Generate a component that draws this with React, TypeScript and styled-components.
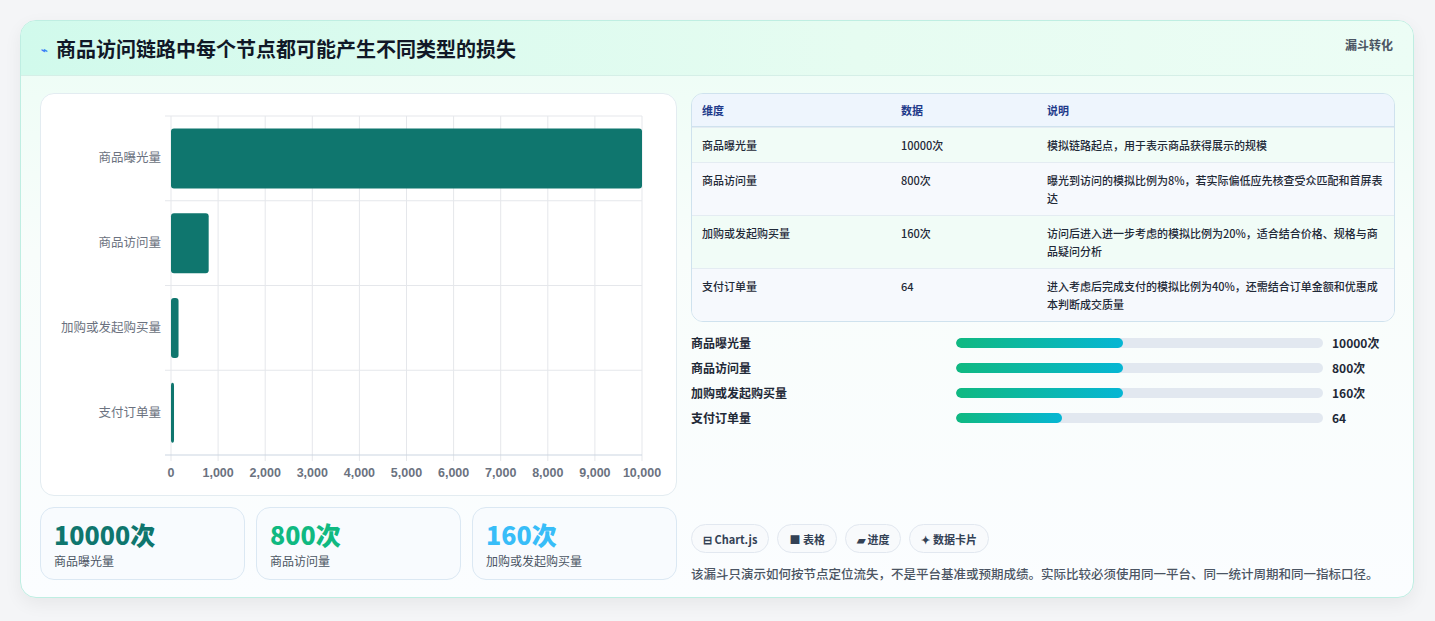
import React from 'react';
import styled, { createGlobalStyle } from 'styled-components';

const G = createGlobalStyle`
  html,body{margin:0;padding:0;background:#f4f5f7;}
  body{font-family:"Noto Sans CJK SC","Noto Sans",sans-serif;color:#1f2937;}
`;
const Page = styled.div`padding:20px 20px 0 20px;height:601px;`;
const Card = styled.div`
  width:1394px;height:578px;box-sizing:border-box;border:1px solid #bfeee2;border-radius:16px;
  background:linear-gradient(180deg,#ecfdf5 0%,#f8fdfb 40%,#fbfdff 100%);
  box-shadow:0 6px 18px rgba(0,0,0,0.06);overflow:hidden;
`;
const Header = styled.div`
  height:55px;box-sizing:border-box;display:flex;justify-content:space-between;align-items:flex-start;
  padding:0 20px 0 20px;border-bottom:1px solid #d5efe7;
  background:linear-gradient(90deg,#d1faec 0%,#e6fcf1 60%,#ecfdf5 100%);
`;
const Title = styled.h1`margin:0;margin-top:13px;font-size:20px;font-weight:700;color:#111827;display:flex;align-items:center;gap:8px;`;
const Tag = styled.div`margin-top:15px;font-size:12px;font-weight:700;color:#4b5563;`;
const Body = styled.div`display:grid;grid-template-columns:637px 704px;gap:14px;padding:17px 19px 0 19px;`;
const Col = styled.div`display:flex;flex-direction:column;`;
const ChartCard = styled.div`height:403px;box-sizing:border-box;background:#fff;border:1px solid #e3ecf1;border-radius:14px;`;
const Stats = styled.div`display:grid;grid-template-columns:repeat(3,1fr);gap:11px;margin-top:11px;`;
const Stat = styled.div`height:73px;box-sizing:border-box;border:1px solid #dbe8f3;border-radius:14px;background:#f8fbfe;padding:9px 13px;`;
const StatNum = styled.div<{c:string}>`font-size:25px;font-weight:800;color:${p=>p.c};line-height:34px;`;
const StatLbl = styled.div`font-size:12px;color:#4b5563;margin-top:1px;`;
const Table = styled.table`width:100%;table-layout:fixed;border-collapse:separate;border-spacing:0;border:1px solid #cfe2ee;border-radius:12px;overflow:hidden;font-size:11px;`;
const Th = styled.th<{w?:number}>`text-align:left;font-weight:700;color:#1e3a8a;background:#eef5fd;height:32px;padding:0 10px;border-bottom:1px solid #cfe2ee;${p=>p.w?`width:${p.w}px;`:''}`;
const Td = styled.td<{alt?:boolean}>`vertical-align:top;padding:8px 10px 8px;line-height:18px;color:#1f2937;font-weight:500;background:${p=>p.alt?'#f6f9fd':'#f1fcf7'};border-top:1px solid #e4ecf2;`;
const Bars = styled.div`display:flex;flex-direction:column;gap:6px;margin-top:11px;`;
const BarRow = styled.div`display:grid;grid-template-columns:265px 367px 1fr;align-items:center;height:19px;font-size:12px;font-weight:600;color:#1f2937;`;
const Track = styled.div`height:10px;border-radius:5px;background:#e2e8f0;overflow:hidden;`;
const Fill = styled.div`height:100%;border-radius:5px;background:linear-gradient(90deg,#10b981,#06b6d4);`;
const Val = styled.div`padding-left:9px;font-weight:700;`;
const Chips = styled.div`display:flex;gap:8px;margin-top:97px;`;
const Chip = styled.div`height:29px;box-sizing:border-box;padding:0 11px;border:1px solid #e2e8f0;border-radius:15px;background:#f8fafc;display:flex;align-items:center;gap:4px;font-size:11px;font-weight:700;color:#334155;`;
const Note = styled.p`margin:10px 0 0;font-size:12.5px;line-height:21px;color:#4b5563;font-weight:500;`;

const cats=['商品曝光量','商品访问量','加购或发起购买量','支付订单量'];
const vals=[10000,800,160,64];

function Chart(){
  const x0=130,x1=601,y0=22,y1=361;
  const w=x1-x0,band=(y1-y0)/4;
  return <svg width="637" height="403" style={{display:'block'}}>
    {Array.from({length:11}).map((_,i)=>{const x=x0+w*i/10;return <g key={i}>
      <line x1={x} x2={x} y1={y0} y2={y1+6} stroke="#e5e7eb"/>
      <text x={x} y={383} textAnchor="middle" fontSize="12.5" fill="#6b7280" fontFamily="Liberation Sans,sans-serif" fontWeight="700">{(i*1000).toLocaleString('en-US')}</text></g>})}
    {[0,1,2,3,4].map(i=><line key={i} x1={x0-6} x2={x1} y1={y0+band*i} y2={y0+band*i} stroke={i===4?'#cbd5e1':'#e5e7eb'}/>)}
    {cats.map((c,i)=>{const cy=y0+band*i+band/2;const bw=Math.max(2,w*vals[i]/10000);return <g key={c}>
      <text x={x0-10} y={cy+4} textAnchor="end" fontSize="12.5" fill="#6b7280" fontFamily="Noto Sans CJK SC,sans-serif">{c}</text>
      <rect x={x0} y={cy-30} width={bw} height={60} rx="3" fill="#0f766e"/></g>})}
  </svg>;
}

export default function App(){
  const rows=[['商品曝光量','10000次','模拟链路起点，用于表示商品获得展示的规模'],['商品访问量','800次','曝光到访问的模拟比例为8%，若实际偏低应先核查受众匹配和首屏表达'],['加购或发起购买量','160次','访问后进入进一步考虑的模拟比例为20%，适合结合价格、规格与商品疑问分析'],['支付订单量','64','进入考虑后完成支付的模拟比例为40%，还需结合订单金额和优惠成本判断成交质量']];
  const pct=[45.5,45.5,45.5,29];
  return <><G/><Page><Card>
    <Header><Title><span style={{fontSize:11,color:'#3b82f6'}}>⌁</span>商品访问链路中每个节点都可能产生不同类型的损失</Title><Tag>漏斗转化</Tag></Header>
    <Body>
      <Col>
        <ChartCard><Chart/></ChartCard>
        <Stats>
          <Stat><StatNum c="#0f766e">10000次</StatNum><StatLbl>商品曝光量</StatLbl></Stat>
          <Stat><StatNum c="#10b981">800次</StatNum><StatLbl>商品访问量</StatLbl></Stat>
          <Stat><StatNum c="#38bdf8">160次</StatNum><StatLbl>加购或发起购买量</StatLbl></Stat>
        </Stats>
      </Col>
      <Col>
        <Table><thead><tr><Th w={179}>维度</Th><Th w={126}>数据</Th><Th>说明</Th></tr></thead>
          <tbody>{rows.map((r,i)=><tr key={i}>{r.map((c,j)=><Td key={j} alt={i%2===1}>{c}</Td>)}</tr>)}</tbody></Table>
        <Bars>{rows.map((r,i)=><BarRow key={i}><div>{r[0]}</div><Track><Fill style={{width:pct[i]+'%'}}/></Track><Val>{r[1]}</Val></BarRow>)}</Bars>
        <Chips><Chip>⊟ Chart.js</Chip><Chip>■ 表格</Chip><Chip>▰ 进度</Chip><Chip>✦ 数据卡片</Chip></Chips>
        <Note>该漏斗只演示如何按节点定位流失，不是平台基准或预期成绩。实际比较必须使用同一平台、同一统计周期和同一指标口径。</Note>
      </Col>
    </Body>
  </Card></Page></>;
}
